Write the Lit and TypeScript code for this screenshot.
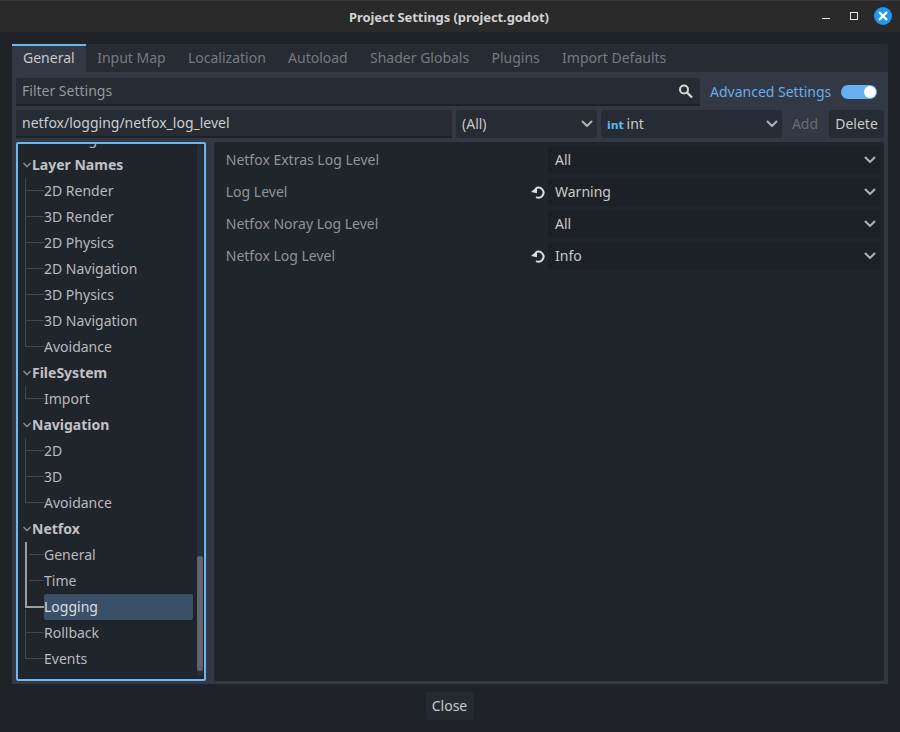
import {css, html, LitElement, svg, TemplateResult} from "lit";
import {customElement} from "lit/decorators.js";

const chevron = html`<svg class="chev" width="12" height="8" viewBox="0 0 12 8"><path d="M1.5 1.5 6 6l4.5-4.5" fill="none" stroke="currentColor" stroke-width="2" stroke-linecap="round" stroke-linejoin="round"/></svg>`;

const foldIcon = html`<svg class="fold" width="9" height="6" viewBox="0 0 9 6"><path d="M1 1l3.5 3.5L8 1" fill="none" stroke="currentColor" stroke-width="1.6"/></svg>`;

const resetIcon = svg`<svg class="reset" width="16" height="16" viewBox="0 0 16 16"><path d="M5.8 4.4A5 5 0 1 1 6 13" fill="none" stroke="#dcdddf" stroke-width="2"/><path d="M1 8l6-5.2V9.2z" fill="#dcdddf"/></svg>`;

type TreeRow = {
    label: string;
    section?: boolean;
    selected?: boolean;
    line?: "plain" | "last" | "hot" | "hot-end" | "after";
};

const TREE: TreeRow[] = [
    {label: "Loading", line: "last"},
    {label: "Layer Names", section: true},
    {label: "2D Render"},
    {label: "3D Render"},
    {label: "2D Physics"},
    {label: "2D Navigation"},
    {label: "3D Physics"},
    {label: "3D Navigation"},
    {label: "Avoidance", line: "last"},
    {label: "FileSystem", section: true},
    {label: "Import", line: "last"},
    {label: "Navigation", section: true},
    {label: "2D"},
    {label: "3D"},
    {label: "Avoidance", line: "last"},
    {label: "Netfox", section: true},
    {label: "General", line: "hot"},
    {label: "Time", line: "hot"},
    {label: "Logging", line: "hot-end", selected: true},
    {label: "Rollback", line: "after"},
    {label: "Events", line: "last"},
];

const SETTINGS = [
    {label: "Netfox Extras Log Level", value: "All", changed: false},
    {label: "Log Level", value: "Warning", changed: true},
    {label: "Netfox Noray Log Level", value: "All", changed: false},
    {label: "Netfox Log Level", value: "Info", changed: true},
];

const TABS = ["General", "Input Map", "Localization", "Autoload", "Shader Globals", "Plugins", "Import Defaults"];

@customElement("app-root")
export class AppRoot extends LitElement {
    renderTree(): TemplateResult[] {
        return TREE.map(row => {
            if (row.section) {
                return html`<div class="row section">${foldIcon}<span>${row.label}</span></div>`;
            }
            return html`
                <div class="row child ${row.line ?? "plain"}">
                    <span class="item ${row.selected ? "selected" : ""}">${row.label}</span>
                </div>`;
        });
    }

    render(): TemplateResult {
        return html`
            <header class="titlebar">
                <span class="title">Project Settings (project.godot)</span>
                <div class="controls">
                    <svg class="min" width="10" height="10" viewBox="0 0 10 10"><rect x="1" y="7" width="8" height="1" fill="#e6e6e6"/></svg>
                    <svg width="10" height="10" viewBox="0 0 10 10"><rect x="1.5" y="1.5" width="7" height="7" fill="none" stroke="#e6e6e6"/></svg>
                    <svg class="close" width="18" height="18" viewBox="0 0 18 18"><circle cx="9" cy="9" r="9" fill="#1d99f3"/><path d="M5.6 5.6l6.8 6.8M12.4 5.6l-6.8 6.8" stroke="#fff" stroke-width="2.2" stroke-linecap="round"/></svg>
                </div>
            </header>
            <main class="body">
                <nav class="tabs">
                    ${TABS.map((t, i) => html`<span class="tab ${i === 0 ? "active" : ""}">${t}</span>`)}
                </nav>
                <section class="panel">
                    <div class="filter-row">
                        <div class="field filter">
                            <span>Filter Settings</span>
                            <svg width="16" height="16" viewBox="0 0 16 16"><circle cx="6" cy="6.5" r="4" fill="none" stroke="#d8d8d8" stroke-width="2"/><path d="M9 9.5l5 5" stroke="#d8d8d8" stroke-width="2.4"/></svg>
                        </div>
                        <span class="advanced">Advanced Settings</span>
                        <span class="toggle"><i></i></span>
                    </div>
                    <div class="add-row">
                        <div class="field path">netfox/logging/netfox_log_level</div>
                        <div class="select scope"><span>(All)</span>${chevron}</div>
                        <div class="select type"><span><b class="int">int</b> int</span>${chevron}</div>
                        <span class="btn add">Add</span>
                        <span class="btn delete">Delete</span>
                    </div>
                    <div class="split">
                        <div class="tree">
                            <div class="tree-list">${this.renderTree()}</div>
                            <div class="scrollbar"><i></i></div>
                        </div>
                        <div class="inspector">
                            ${SETTINGS.map(s => html`
                                <div class="setting">
                                    <span class="name">${s.label}</span>
                                    <span class="revert">${s.changed ? resetIcon : ""}</span>
                                    <div class="select value"><span>${s.value}</span>${chevron}</div>
                                </div>`)}
                        </div>
                    </div>
                </section>
                <footer class="footer"><span class="btn close-btn">Close</span></footer>
            </main>
        `;
    }

    static styles = css`
        :host {
            display: flex;
            flex-direction: column;
            width: 900px;
            height: 732px;
            overflow: hidden;
            background: #1f2329;
            color: #c8c9cb;
            font: 14px/20px "Noto Sans", sans-serif;
        }

        .titlebar {
            position: relative;
            flex: none;
            height: 32px;
            box-sizing: border-box;
            display: flex;
            align-items: center;
            justify-content: center;
            background: #2a2a2a;
            border-top: 1px solid #3a3a3a;
        }

        .title {
            font-size: 13px;
            font-weight: 700;
            letter-spacing: -0.08px;
            color: #d2d2d2;
            margin-right: 2px;
        }

        .controls {
            position: absolute;
            right: 8px;
            top: 6px;
            display: flex;
            align-items: center;
            gap: 15px;
        }

        .min {
            margin-right: 3px;
        }

        .body {
            flex: 1;
            display: flex;
            flex-direction: column;
            padding: 12px 12px 0;
            min-height: 0;
        }

        .tabs {
            flex: none;
            display: flex;
            height: 28px;
            background: #262b34;
            border-radius: 3px 3px 0 0;
        }

        .tab {
            box-sizing: border-box;
            padding: 2px 11.15px 0;
            color: #777a80;
            border-top: 2px solid transparent;
            line-height: 20px;
        }

        .tab.active {
            width: 74px;
            color: #c8c9cb;
            background: #323844;
            border-top-color: #70b6f0;
            padding-left: 11px;
        }

        .panel {
            flex: none;
            height: 612px;
            box-sizing: border-box;
            display: flex;
            flex-direction: column;
            gap: 4px;
            padding: 6px 4px 3px;
            background: #323844;
        }

        .filter-row {
            flex: none;
            height: 28px;
            display: flex;
            align-items: center;
        }

        .field {
            box-sizing: border-box;
            height: 28px;
            padding: 0 6px;
            display: flex;
            align-items: center;
            background: #262b34;
            border-bottom: 2px solid #1e2228;
            border-radius: 2px 2px 0 0;
        }

        .filter {
            width: 684px;
            justify-content: space-between;
            color: #95989d;
        }

        .advanced {
            margin-left: 10px;
            color: #68aee8;
        }

        .toggle {
            margin-left: 10px;
            width: 36px;
            height: 14px;
            border-radius: 7px;
            background: #68b0f2;
            display: flex;
            align-items: center;
            justify-content: flex-end;
            padding-right: 1px;
            box-sizing: border-box;
        }

        .toggle i {
            width: 12px;
            height: 12px;
            border-radius: 50%;
            background: #fff;
        }

        .add-row {
            flex: none;
            height: 28px;
            display: flex;
            gap: 4px;
            align-items: center;
        }

        .path {
            width: 436px;
            color: #cdced0;
        }

        .select {
            box-sizing: border-box;
            height: 28px;
            padding: 0 4px 0 6px;
            display: flex;
            align-items: center;
            justify-content: space-between;
            border-radius: 3px;
            background: #262b34;
        }

        .chev {
            color: #b0b1b4;
        }

        .scope {
            width: 141px;
        }

        .type {
            width: 181px;
        }

        .int {
            font: 700 11px/14px "DejaVu Sans", sans-serif;
            color: #5bb7f0;
            margin-right: -1px;
        }

        .btn {
            box-sizing: border-box;
            height: 28px;
            display: flex;
            align-items: center;
            justify-content: center;
            border-radius: 3px;
        }

        .add {
            width: 38px;
            margin-right: 1px;
            color: #696c72;
        }

        .delete {
            width: 55px;
            background: #262b34;
        }

        .split {
            flex: 1;
            min-height: 0;
            display: flex;
            gap: 8px;
        }

        .tree {
            position: relative;
            width: 190px;
            box-sizing: border-box;
            border: 2px solid #70b6f0;
            border-radius: 2px;
            background: #20242b;
            overflow: hidden;
        }

        .tree-list {
            margin-top: -18px;
        }

        .row {
            position: relative;
            height: 26px;
            display: flex;
            align-items: center;
        }

        .section {
            padding-left: 4px;
            font-weight: 700;
            color: #c0c1c4;
        }

        .fold {
            color: #83868b;
            width: 10px;
        }

        .child {
            padding-left: 26px;
            color: #b9babd;
        }

        .child::before {
            content: "";
            position: absolute;
            left: 7px;
            top: 0;
            bottom: 0;
            width: 1px;
            background: #43474e;
        }

        .child::after {
            content: "";
            position: absolute;
            left: 8px;
            top: 12px;
            width: 18px;
            height: 1px;
            background: #43474e;
        }

        .child.last::before {
            bottom: 13px;
        }

        .child.hot::before {
            width: 2px;
            background: #9b9da1;
        }

        .child.hot::after {
            left: 11px;
            width: 15px;
        }

        .child.hot-end {
            background: linear-gradient(#43474e, #43474e) 7px 15px / 1px 11px no-repeat;
        }

        .child.hot-end::before {
            width: 2px;
            bottom: 12px;
            background: #9b9da1;
        }

        .child.hot-end::after {
            height: 2px;
            background: #9b9da1;
        }

        .item {
            flex: none;
            width: 149px;
            height: 26px;
            line-height: 26px;
            border-radius: 2px;
        }

        .item.selected {
            background: #3a5068;
            color: #dcdde0;
        }

        .scrollbar {
            position: absolute;
            top: 0;
            bottom: 3px;
            right: 1px;
            width: 6px;
            border-radius: 3px;
            background: #2a2f37;
        }

        .scrollbar i {
            position: absolute;
            left: 0;
            right: 0;
            bottom: 5px;
            height: 115px;
            border-radius: 3px;
            background: #62666c;
        }

        .inspector {
            width: 671px;
            box-sizing: border-box;
            padding: 4px;
            display: flex;
            flex-direction: column;
            gap: 4px;
            background: #20242b;
            border-radius: 2px;
        }

        .setting {
            display: flex;
            align-items: center;
            height: 28px;
            padding-left: 8px;
        }

        .name {
            flex: 1;
            color: #919397;
        }

        .revert {
            width: 16px;
            height: 16px;
            margin-right: 2px;
        }

        .value {
            width: 332px;
            flex: none;
            padding-left: 7px;
            background: #1d2126;
        }

        .footer {
            flex: 1;
            display: flex;
            justify-content: center;
            padding-top: 8px;
        }

        .close-btn {
            width: 48px;
            background: #252a32;
            margin-right: 1px;
        }
    `;
}
